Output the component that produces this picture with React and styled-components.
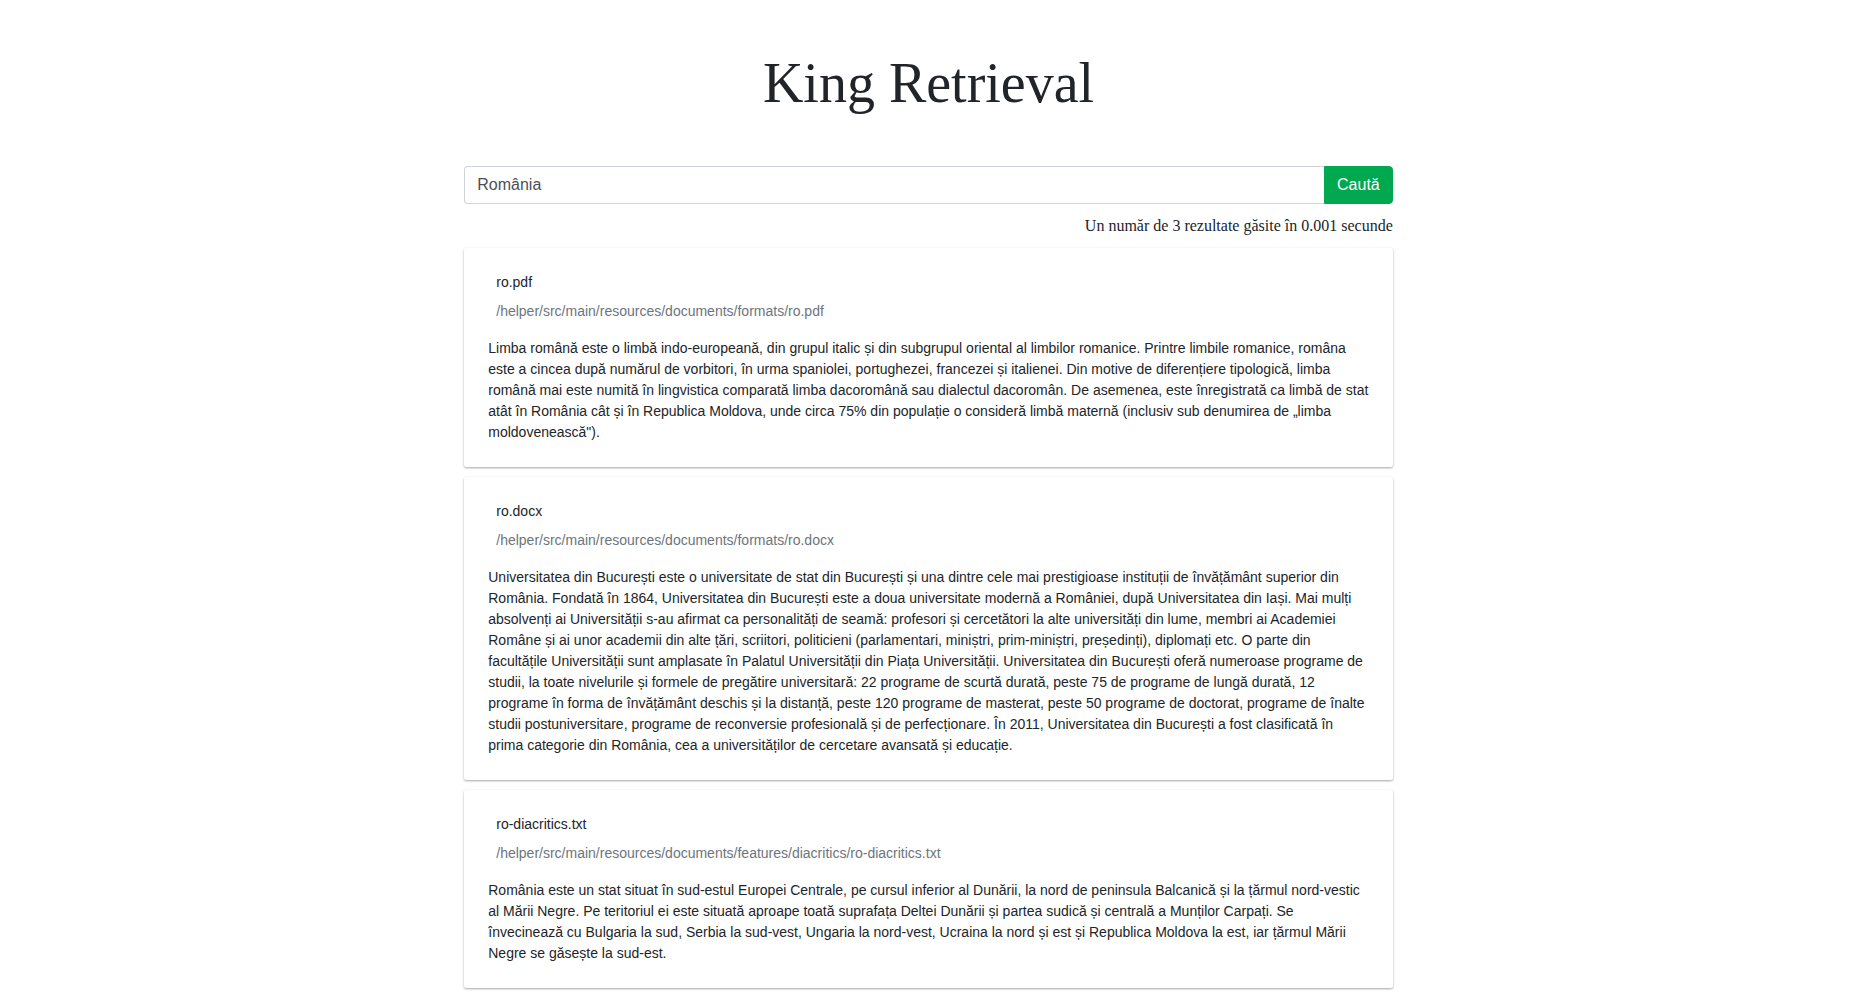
import React from 'react'
import styled, { createGlobalStyle } from 'styled-components'

const GlobalStyle = createGlobalStyle`
  body {
    margin: 0;
    background: #fff;
    color: #212529;
    font-family: "Liberation Serif", "Times New Roman", serif;
  }
`

const results = [
  {
    name: 'ro.pdf',
    path: '/helper/src/main/resources/documents/formats/ro.pdf',
    text: 'Limba română este o limbă indo-europeană, din grupul italic și din subgrupul oriental al limbilor romanice. Printre limbile romanice, româna este a cincea după numărul de vorbitori, în urma spaniolei, portughezei, francezei și italienei. Din motive de diferențiere tipologică, limba română mai este numită în lingvistica comparată limba dacoromână sau dialectul dacoromân. De asemenea, este înregistrată ca limbă de stat atât în România cât și în Republica Moldova, unde circa 75% din populație o consideră limbă maternă (inclusiv sub denumirea de „limba moldovenească").'
  },
  {
    name: 'ro.docx',
    path: '/helper/src/main/resources/documents/formats/ro.docx',
    text: 'Universitatea din București este o universitate de stat din București și una dintre cele mai prestigioase instituții de învățământ superior din România. Fondată în 1864, Universitatea din București este a doua universitate modernă a României, după Universitatea din Iași. Mai mulți absolvenți ai Universității s-au afirmat ca personalități de seamă: profesori și cercetători la alte universități din lume, membri ai Academiei Române și ai unor academii din alte țări, scriitori, politicieni (parlamentari, miniștri, prim-miniștri, președinți), diplomați etc. O parte din facultățile Universității sunt amplasate în Palatul Universității din Piața Universității. Universitatea din București oferă numeroase programe de studii, la toate nivelurile și formele de pregătire universitară: 22 programe de scurtă durată, peste 75 de programe de lungă durată, 12 programe în forma de învățământ deschis și la distanță, peste 120 programe de masterat, peste 50 programe de doctorat, programe de înalte studii postuniversitare, programe de reconversie profesională și de perfecționare. În 2011, Universitatea din București a fost clasificată în prima categorie din România, cea a universităților de cercetare avansată și educație.'
  },
  {
    name: 'ro-diacritics.txt',
    path: '/helper/src/main/resources/documents/features/diacritics/ro-diacritics.txt',
    text: 'România este un stat situat în sud-estul Europei Centrale, pe cursul inferior al Dunării, la nord de peninsula Balcanică și la țărmul nord-vestic al Mării Negre. Pe teritoriul ei este situată aproape toată suprafața Deltei Dunării și partea sudică și centrală a Munților Carpați. Se învecinează cu Bulgaria la sud, Serbia la sud-vest, Ungaria la nord-vest, Ucraina la nord și est și Republica Moldova la est, iar țărmul Mării Negre se găsește la sud-est.'
  }
]

const ResultCard = ({ name, path, text }) => (
  <ResultCard.Container>
    <ResultCard.Name>{name}</ResultCard.Name>
    <ResultCard.Path>{path}</ResultCard.Path>
    <ResultCard.Body>{text}</ResultCard.Body>
  </ResultCard.Container>
)

ResultCard.Container = styled.div`
  display: flex;
  flex-direction: column;
  padding: 24px;
  background: #fff;
  border-radius: 2px;
  box-shadow: 0 1px 3px rgba(0, 0, 0, 0.12), 0 1px 2px rgba(0, 0, 0, 0.24);
  font-family: "Liberation Sans", Arial, sans-serif;
  font-size: 14px;
  line-height: 21px;
`

ResultCard.Name = styled.div`
  padding-left: 8px;
  color: #212529;
`

ResultCard.Path = styled.div`
  padding-left: 8px;
  margin-top: 8px;
  color: #6c757d;
`

ResultCard.Body = styled.p`
  margin: 16px 0 0;
  color: #212529;
`

const App = () => {
  return (
    <>
      <GlobalStyle />
      <Page>
        <Title>King Retrieval</Title>
        <SearchGroup>
          <SearchInput defaultValue='România' />
          <SearchButton>Caută</SearchButton>
        </SearchGroup>
        <Stats>Un număr de 3 rezultate găsite în 0.001 secunde</Stats>
        <ResultList>
          {results.map(r => (
            <ResultCard key={r.name} {...r} />
          ))}
        </ResultList>
      </Page>
    </>
  )
}

const Page = styled.div`
  width: 50%;
  margin: 0 auto;
  padding: 50px 0 12px;
`

const Title = styled.h1`
  margin: 0 0 49px;
  text-align: center;
  font-family: "Liberation Serif", "Times New Roman", serif;
  font-size: 56px;
  font-weight: 400;
  line-height: 1.2;
  color: #212529;
`

const SearchGroup = styled.div`
  display: flex;
  height: 38px;
`

const SearchInput = styled.input`
  flex: 1;
  min-width: 0;
  box-sizing: border-box;
  height: 38px;
  padding: 6px 12px;
  border: 1px solid #ced4da;
  border-right: none;
  border-radius: 4px 0 0 4px;
  font-family: "Liberation Sans", Arial, sans-serif;
  font-size: 16px;
  line-height: 24px;
  color: #495057;
  outline: none;
`

const SearchButton = styled.button`
  box-sizing: border-box;
  height: 38px;
  padding: 6px 12px;
  border: 1px solid #00a94f;
  border-radius: 0 4px 4px 0;
  background: #00a94f;
  color: #fff;
  font-family: "Liberation Sans", Arial, sans-serif;
  font-size: 16px;
  line-height: 24px;
  cursor: pointer;
`

const Stats = styled.div`
  margin: 10px 0 10px;
  text-align: right;
  font-size: 16px;
  line-height: 24px;
  color: #212529;
`

const ResultList = styled.div`
  display: flex;
  flex-direction: column;
  gap: 10px;
`

export default App
